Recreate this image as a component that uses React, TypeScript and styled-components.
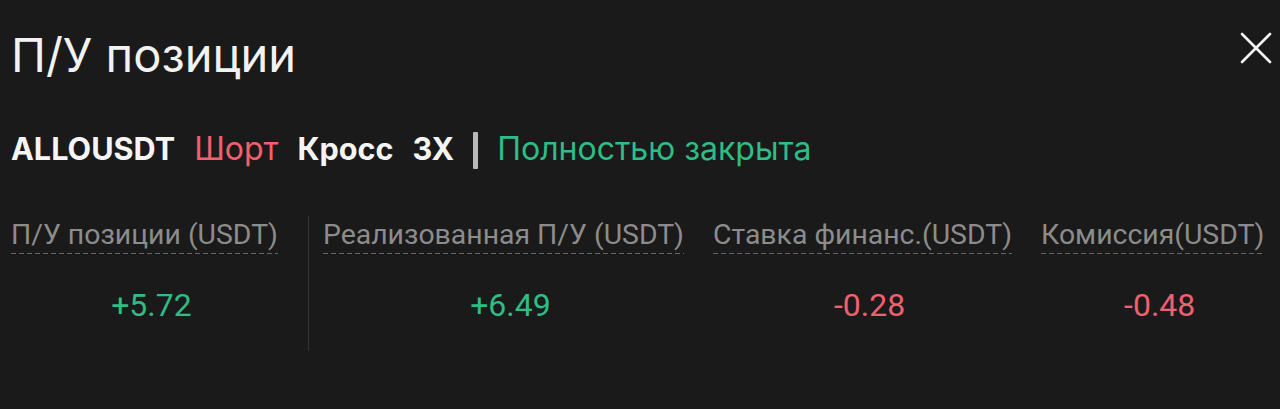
import React from "react";
import styled, { createGlobalStyle } from "styled-components";

const Global = createGlobalStyle`
  html, body { margin: 0; padding: 0; background: #1a1a1a; }
  * { box-sizing: border-box; }
`;

const Panel = styled.div`
  width: 1280px;
  height: 409px;
  background: #1a1a1a;
  padding: 26px 11px 0 11px;
  display: flex;
  flex-direction: column;
  font-family: Inter, "Noto Sans", sans-serif;
`;

const Header = styled.div`
  display: flex;
  justify-content: space-between;
  align-items: flex-start;
`;

const Title = styled.h1`
  margin: 0;
  font-size: 47px;
  font-weight: 400;
  line-height: 57px;
  color: #f2f2f2;
`;

const CloseButton = styled.button`
  background: none;
  border: none;
  padding: 0;
  margin: 6px -3px 0 0;
  width: 32px;
  height: 32px;
  display: flex;
  cursor: pointer;
`;

const InfoRow = styled.div`
  margin-top: 46px;
  display: flex;
  align-items: center;
  gap: 19px;
  height: 40px;
`;

const Tag = styled.span<{ $tone?: "white" | "red" | "green"; $bold?: boolean }>`
  font-size: ${(p) => (p.$bold ? "30.6px" : "32px")};
  font-weight: ${(p) => (p.$bold ? 700 : 400)};
  color: ${(p) =>
    p.$tone === "red" ? "#f0606e" : p.$tone === "green" ? "#2dbd85" : "#f5f5f5"};
  line-height: 40px;
  white-space: nowrap;
`;

const Bar = styled.span`
  width: 5px;
  height: 37px;
  background: #b8b8b8;
  border-radius: 1px;
  margin-top: 3px;
`;

const Stats = styled.div`
  margin-top: 47px;
  display: flex;
  align-items: flex-start;
  font-family: Roboto, "Noto Sans", sans-serif;
`;

const Column = styled.div<{ $divider?: boolean }>`
  display: flex;
  flex-direction: column;
  align-items: flex-start;
  padding-right: ${(p) => (p.$divider ? "16px" : "15px")};
  margin-right: ${(p) => (p.$divider ? "14px" : "0")};
  border-right: ${(p) => (p.$divider ? "1px solid #333333" : "none")};
  height: 135px;
`;

const Label = styled.span`
  margin-top: 2px;
  font-size: 28.4px;
  color: #8c8c8c;
  line-height: 34px;
  padding-bottom: 2px;
  margin-right: 14px;
  white-space: nowrap;
  background-image: repeating-linear-gradient(
    to right,
    #666666 0 5px,
    transparent 5px 8px
  );
  background-size: 100% 1px;
  background-position: 0 100%;
  background-repeat: no-repeat;
`;

const Value = styled.span<{ $positive: boolean }>`
  align-self: stretch;
  text-align: center;
  margin-top: 32px;
  font-size: 32px;
  line-height: 38px;
  color: ${(p) => (p.$positive ? "#2dbd85" : "#f0606e")};
`;

const stats = [
  { label: "П/У позиции (USDT)", value: "+5.72", positive: true, divider: true },
  { label: "Реализованная П/У (USDT)", value: "+6.49", positive: true },
  { label: "Ставка финанс.(USDT)", value: "-0.28", positive: false },
  { label: "Комиссия(USDT)", value: "-0.48", positive: false },
];

export default function App() {
  return (
    <>
      <Global />
      <Panel>
        <Header>
          <Title>П/У позиции</Title>
          <CloseButton aria-label="Закрыть">
            <svg width="32" height="32" viewBox="0 0 32 32">
              <path d="M2 2 L30 30 M30 2 L2 30" stroke="#f2f2f2" strokeWidth="2.6" strokeLinecap="round" />
            </svg>
          </CloseButton>
        </Header>
        <InfoRow>
          <Tag $bold>ALLOUSDT</Tag>
          <Tag $tone="red">Шорт</Tag>
          <Tag $bold>Кросс</Tag>
          <Tag $bold>3X</Tag>
          <Bar />
          <Tag $tone="green">Полностью закрыта</Tag>
        </InfoRow>
        <Stats>
          {stats.map((s) => (
            <Column key={s.label} $divider={s.divider}>
              <Label>{s.label}</Label>
              <Value $positive={s.positive}>{s.value}</Value>
            </Column>
          ))}
        </Stats>
      </Panel>
    </>
  );
}
